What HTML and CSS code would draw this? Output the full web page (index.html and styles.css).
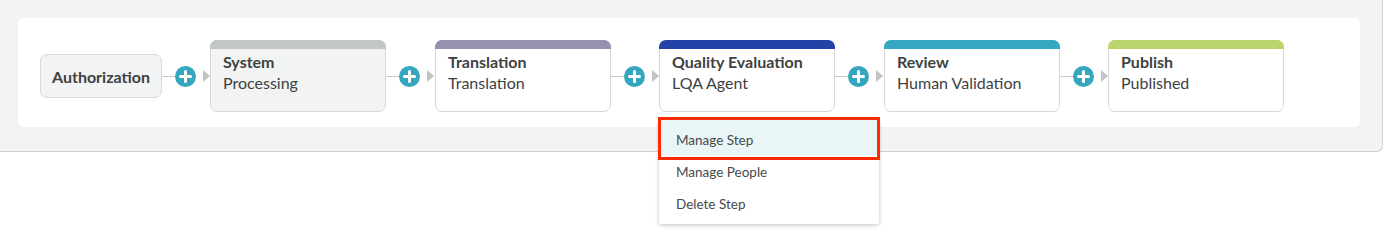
FILE: index.html
```html
<!DOCTYPE html>
<html lang="en">
<head>
  <meta charset="UTF-8">
  <title>Workflow Steps</title>
  <link rel="stylesheet" href="styles.css">
</head>
<body>

  <div class="panel">
    <p class="hint">Drag the steps in order (review, translate, or publish steps),</p>

    <div class="workflow">
      <div class="step step-start">Authorization</div>

      <div class="connector connector-short">
        <span class="line"></span>
        <span class="add">
          <svg width="21" height="21" viewBox="0 0 21 21"><circle cx="10.5" cy="10.5" r="10.5" fill="#34a7bf"/><path d="M10.5 5.5v10M5.5 10.5h10" stroke="#fff" stroke-width="3" stroke-linecap="round"/></svg>
        </span>
        <span class="arrow"></span>
      </div>

      <div class="step step-system">
        <div class="bar"></div>
        <div class="title">System</div>
        <div class="sub">Processing</div>
      </div>

      <div class="connector">
        <span class="line"></span>
        <span class="add">
          <svg width="21" height="21" viewBox="0 0 21 21"><circle cx="10.5" cy="10.5" r="10.5" fill="#34a7bf"/><path d="M10.5 5.5v10M5.5 10.5h10" stroke="#fff" stroke-width="3" stroke-linecap="round"/></svg>
        </span>
        <span class="arrow"></span>
      </div>

      <div class="step">
        <div class="bar bar-purple"></div>
        <div class="title">Translation</div>
        <div class="sub">Translation</div>
      </div>

      <div class="connector connector-short">
        <span class="line"></span>
        <span class="add">
          <svg width="21" height="21" viewBox="0 0 21 21"><circle cx="10.5" cy="10.5" r="10.5" fill="#34a7bf"/><path d="M10.5 5.5v10M5.5 10.5h10" stroke="#fff" stroke-width="3" stroke-linecap="round"/></svg>
        </span>
        <span class="arrow"></span>
      </div>

      <div class="step step-open">
        <div class="bar bar-blue"></div>
        <div class="title">Quality Evaluation</div>
        <div class="sub">LQA Agent</div>

        <ul class="menu">
          <li class="active">Manage Step</li>
          <li>Manage People</li>
          <li>Delete Step</li>
        </ul>
        <div class="callout"></div>
      </div>

      <div class="connector">
        <span class="line"></span>
        <span class="add">
          <svg width="21" height="21" viewBox="0 0 21 21"><circle cx="10.5" cy="10.5" r="10.5" fill="#34a7bf"/><path d="M10.5 5.5v10M5.5 10.5h10" stroke="#fff" stroke-width="3" stroke-linecap="round"/></svg>
        </span>
        <span class="arrow"></span>
      </div>

      <div class="step">
        <div class="bar bar-teal"></div>
        <div class="title">Review</div>
        <div class="sub">Human Validation</div>
      </div>

      <div class="connector connector-short">
        <span class="line"></span>
        <span class="add">
          <svg width="21" height="21" viewBox="0 0 21 21"><circle cx="10.5" cy="10.5" r="10.5" fill="#34a7bf"/><path d="M10.5 5.5v10M5.5 10.5h10" stroke="#fff" stroke-width="3" stroke-linecap="round"/></svg>
        </span>
        <span class="arrow"></span>
      </div>

      <div class="step">
        <div class="bar bar-green"></div>
        <div class="title">Publish</div>
        <div class="sub">Published</div>
      </div>
    </div>
  </div>

</body>
</html>
```

FILE: styles.css
```css
/* General Styles */
html, body {
  min-height: 244px;
}

body {
  margin: 0;
  padding: 0;
  background: #fff;
  font-family: 'Lato', sans-serif;
  color: #3d4242;
}

.panel {
  margin-top: -22px;
  margin-right: 2px;
  padding: 0 22px 24px 18px;
  background: #f2f3f3;
  border-right: 1px solid #cdd1d1;
  border-bottom: 1px solid #cdd1d1;
  border-bottom-right-radius: 6px;
}

.hint {
  margin: 0 0 18px 100px;
  height: 22px;
  font-size: 14px;
  line-height: 16px;
  color: #6b7070;
}

/* Workflow row */
.workflow {
  display: flex;
  align-items: center;
  padding: 22px 22px 15px;
  background: #fff;
  border-radius: 6px;
}

.step {
  position: relative;
  box-sizing: border-box;
  width: 176px;
  height: 72px;
  padding: 0 12px;
  background: #fff;
  border: 1px solid #d6d9d9;
  border-radius: 7px;
}

.step-start {
  width: 122px;
  height: 44px;
  padding: 0;
  display: flex;
  justify-content: center;
  align-items: center;
  background: #f2f3f3;
  font-size: 16px;
  font-weight: 700;
}

.step-system {
  background: #f2f3f3;
}

.bar {
  height: 9px;
  margin: -1px -13px 0;
  background: #c2c6c6;
  border-radius: 7px 7px 0 0;
}

.bar-purple { background: #9790b0; }
.bar-blue { background: #2441a8; }
.bar-teal { background: #34a8c0; }
.bar-green { background: #bcd46c; }

.title {
  margin-top: 2px;
  font-size: 16px;
  font-weight: 700;
  line-height: 21px;
}

.sub {
  font-size: 16px;
  line-height: 21px;
}

/* Connectors */
.connector {
  display: flex;
  align-items: center;
  width: 49px;
}

.connector-short {
  width: 48px;
}

.line {
  width: 13px;
  height: 1px;
  background: #c5c9c9;
}

.add {
  display: flex;
  width: 21px;
  height: 21px;
  margin-right: 7px;
}

.arrow {
  width: 0;
  height: 0;
  border-top: 6px solid transparent;
  border-bottom: 6px solid transparent;
  border-left: 7px solid #c0c4c4;
}

/* Dropdown */
.menu {
  position: absolute;
  top: calc(100% + 9px);
  left: -1px;
  width: 220px;
  margin: 0;
  padding: 4px 0;
  list-style: none;
  background: #fff;
  box-shadow: 0 1px 4px rgba(0, 0, 0, 0.25);
  border-radius: 2px;
  z-index: 2;
}

.menu li {
  height: 32px;
  padding-left: 17px;
  font-size: 13.5px;
  line-height: 32px;
  color: #454a4a;
}

.menu li.active {
  margin-top: -4px;
  padding-top: 4px;
  background: #eaf5f7;
}

.callout {
  position: absolute;
  top: calc(100% + 6px);
  left: -2px;
  width: 216px;
  height: 37px;
  border: 3px solid #ff2a00;
  z-index: 3;
}
```
